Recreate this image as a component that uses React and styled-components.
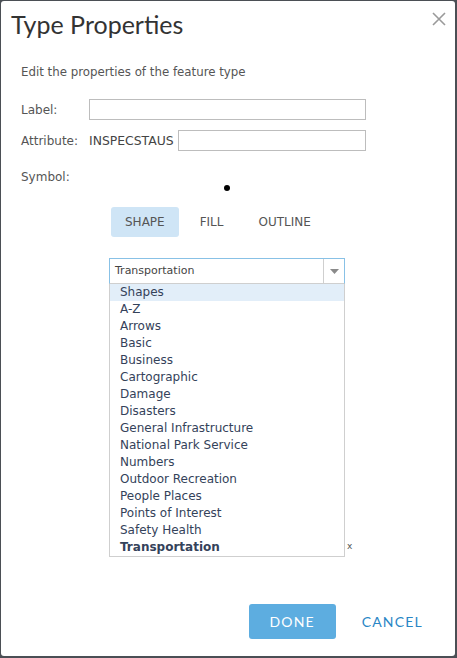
import React from "react";
import styled, { createGlobalStyle } from "styled-components";

const GlobalStyle = createGlobalStyle`
  html, body {
    margin: 0;
    padding: 0;
    background: #4b4f55;
  }
  * {
    box-sizing: border-box;
  }
`;

const Dialog = styled.div`
  margin: 1px 2px 2px 1px;
  height: 655px;
  background: #fff;
  border-radius: 3px;
  display: flex;
  flex-direction: column;
  font-family: "DejaVu Sans", Verdana, sans-serif;
  color: #4a4a4a;
`;

const Header = styled.div`
  display: flex;
  justify-content: space-between;
  align-items: flex-start;
  padding: 8px 9px 0 10px;
`;

const Title = styled.h1`
  margin: 0;
  font-family: Lato, "Open Sans", sans-serif;
  font-weight: 400;
  font-size: 25px;
  line-height: 30px;
  color: #333;
`;

const Close = styled.button`
  border: 0;
  background: none;
  padding: 0;
  margin-top: 3px;
  width: 14px;
  height: 14px;
  cursor: pointer;
  display: flex;
`;

const Body = styled.div`
  padding: 0 20px;
  display: flex;
  flex-direction: column;
`;

const Description = styled.p`
  margin: 25px 0 0;
  font-size: 11.8px;
  line-height: 16px;
  color: #555;
`;

const Row = styled.div`
  display: flex;
  align-items: center;
  width: 345px;
  margin-top: ${(p) => p.$gap}px;
  font-size: 12px;
  line-height: 16px;
`;

const FieldLabel = styled.span`
  width: 68px;
  flex: none;
  color: #555;
`;

const Value = styled.span`
  color: #444;
  font-size: 12.4px;
  margin-right: 4px;
`;

const TextInput = styled.input`
  flex: 1;
  min-width: 0;
  height: 21px;
  border: 1px solid #bdbdbd;
  padding: 0 4px;
  font: inherit;
  outline: none;
`;

const Preview = styled.div`
  display: flex;
  justify-content: center;
  padding-right: 2px;
`;

const Dot = styled.span`
  width: 6px;
  height: 6px;
  border-radius: 50%;
  background: #000;
`;

const Tabs = styled.div`
  display: flex;
  gap: 7px;
  margin: 16px 0 0 90px;
`;

const Tab = styled.button`
  height: 30px;
  padding: 0 14px;
  border: 0;
  border-radius: 3px;
  background: ${(p) => (p.$active ? "#cfe5f6" : "transparent")};
  font-family: "DejaVu Sans", Verdana, sans-serif;
  font-size: 12px;
  color: #555;
  cursor: pointer;
`;

const SelectWrap = styled.div`
  position: relative;
  margin: 21px 0 0 88px;
  width: 236px;
`;

const SelectBox = styled.div`
  display: flex;
  height: 26px;
  border: 1px solid #88c1e6;
  border-bottom-color: #cfcfcf;
  background: #fff;
`;

const SelectText = styled.span`
  flex: 1;
  padding-left: 5px;
  font-size: 11px;
  line-height: 24px;
  color: #444;
`;

const Arrow = styled.span`
  width: 21px;
  border-left: 1px solid #cfcfcf;
  display: flex;
  align-items: center;
  justify-content: center;
`;

const Behind = styled.span`
  position: absolute;
  left: 238px;
  top: 283px;
  font-size: 9px;
  color: #555;
`;

const List = styled.ul`
  position: absolute;
  top: 100%;
  left: 0;
  width: 236px;
  margin: 0;
  padding: 0;
  list-style: none;
  background: #fff;
  border: 1px solid #cfcfcf;
  border-top: 0;
`;

const Item = styled.li`
  height: 17px;
  padding-left: 10px;
  font-size: 12px;
  line-height: 17px;
  color: #34425a;
  font-weight: ${(p) => (p.$selected ? 700 : 400)};
  background: ${(p) => (p.$hover ? "#e2eef9" : "transparent")};
  white-space: nowrap;
`;

const Footer = styled.div`
  margin-top: auto;
  display: flex;
  justify-content: flex-end;
  align-items: center;
  gap: 14px;
  padding: 0 20px 17px 0;
`;

const Button = styled.button`
  height: 35px;
  width: ${(p) => (p.$primary ? "87px" : "auto")};
  padding: ${(p) => (p.$primary ? "0" : "0 12px")};
  border: 0;
  border-radius: 3px;
  background: ${(p) => (p.$primary ? "#5dade0" : "transparent")};
  color: ${(p) => (p.$primary ? "#fff" : "#2a86c5")};
  font-family: Lato, "Open Sans", sans-serif;
  font-size: 14px;
  letter-spacing: 1.2px;
  cursor: pointer;
`;

const categories = [
  "Shapes",
  "A-Z",
  "Arrows",
  "Basic",
  "Business",
  "Cartographic",
  "Damage",
  "Disasters",
  "General Infrastructure",
  "National Park Service",
  "Numbers",
  "Outdoor Recreation",
  "People Places",
  "Points of Interest",
  "Safety Health",
  "Transportation",
];

export default function App() {
  const selected = "Transportation";
  return (
    <>
      <GlobalStyle />
      <Dialog>
        <Header>
          <Title>Type Properties</Title>
          <Close aria-label="Close">
            <svg width="14" height="14" viewBox="0 0 14 14">
              <path d="M1 1L13 13M13 1L1 13" stroke="#9a9a9a" strokeWidth="1.6" />
            </svg>
          </Close>
        </Header>
        <Body>
          <Description>Edit the properties of the feature type</Description>
          <Row $gap={19}>
            <FieldLabel>Label:</FieldLabel>
            <TextInput />
          </Row>
          <Row $gap={10}>
            <FieldLabel>Attribute:</FieldLabel>
            <Value>INSPECSTAUS</Value>
            <TextInput />
          </Row>
          <Row $gap={18}>
            <FieldLabel>Symbol:</FieldLabel>
          </Row>
          <Preview>
            <Dot />
          </Preview>
          <Tabs>
            <Tab $active>SHAPE</Tab>
            <Tab>FILL</Tab>
            <Tab>OUTLINE</Tab>
          </Tabs>
          <SelectWrap>
            <Behind>x</Behind>
            <SelectBox>
              <SelectText>{selected}</SelectText>
              <Arrow>
                <svg width="9" height="5" viewBox="0 0 9 5">
                  <path d="M0 0H9L4.5 5Z" fill="#8a8a8a" />
                </svg>
              </Arrow>
            </SelectBox>
            <List>
              {categories.map((c, i) => (
                <Item key={c} $hover={i === 0} $selected={c === selected}>
                  {c}
                </Item>
              ))}
            </List>
          </SelectWrap>
        </Body>
        <Footer>
          <Button $primary>DONE</Button>
          <Button>CANCEL</Button>
        </Footer>
      </Dialog>
    </>
  );
}
